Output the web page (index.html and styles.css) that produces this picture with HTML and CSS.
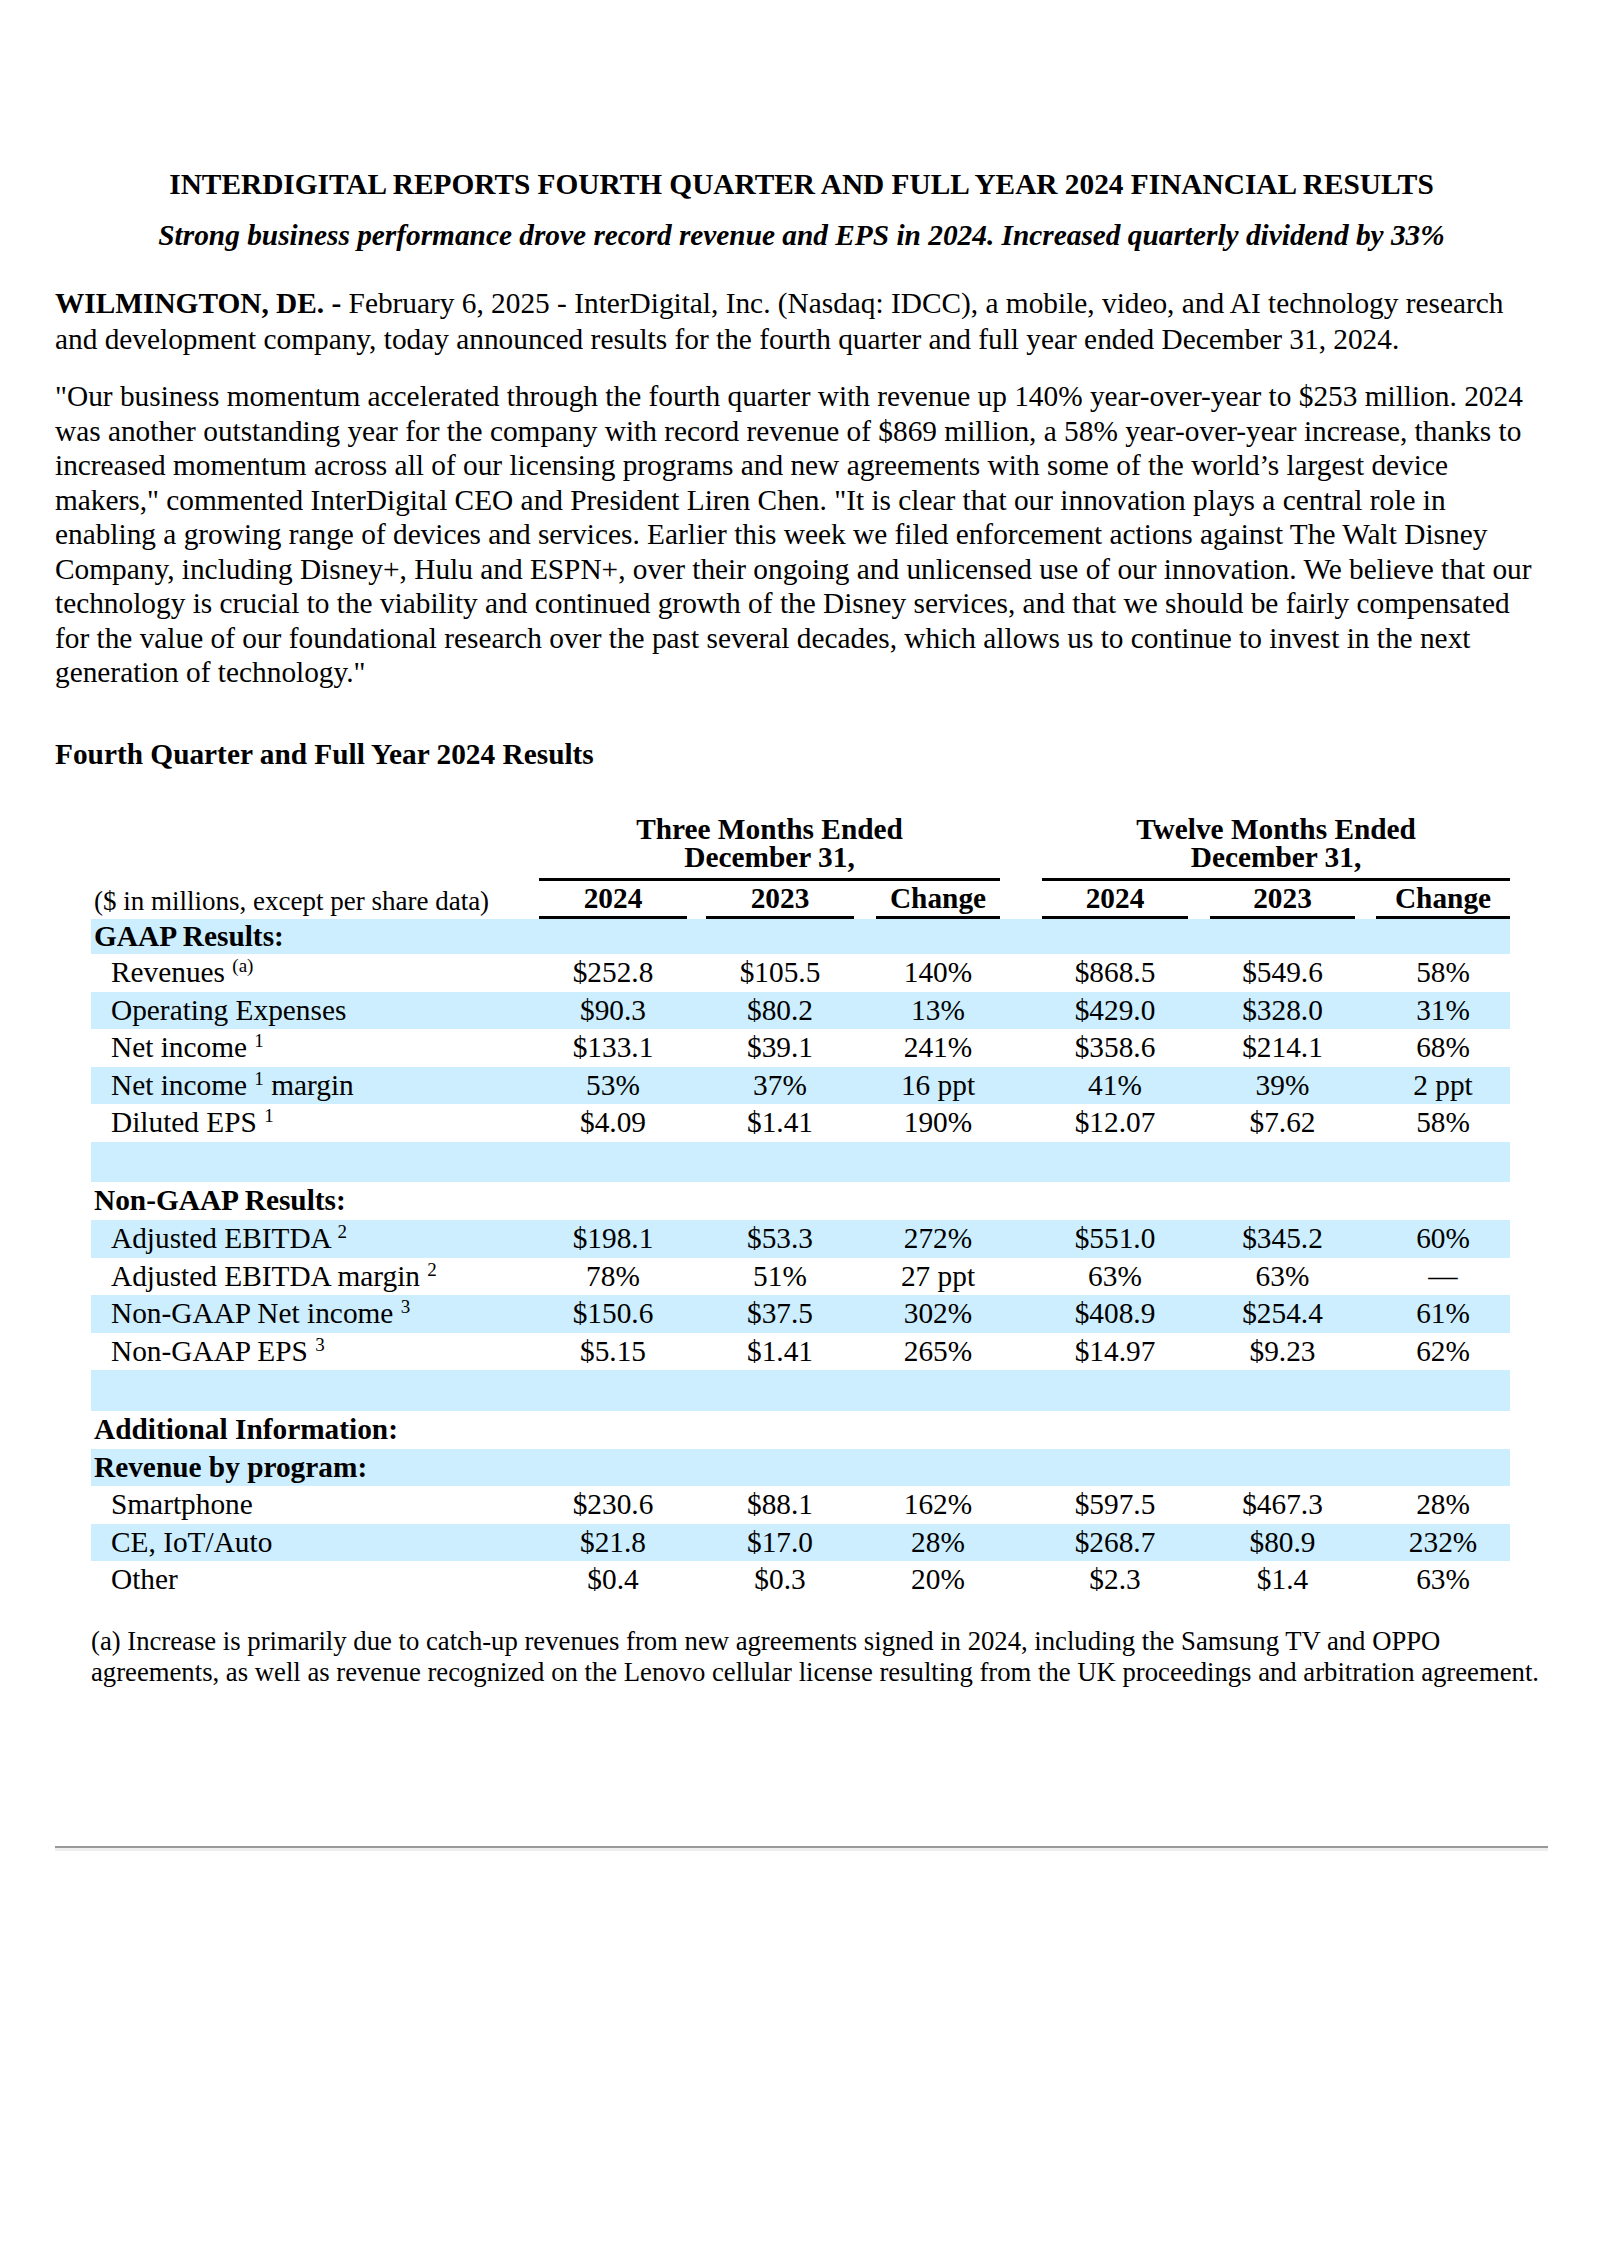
FILE: index.html
```html
<!DOCTYPE html>
<html lang="en">
<head>
    <meta charset="UTF-8">
    <meta name="viewport" content="width=device-width, initial-scale=1.0">
    <title>InterDigital Q4 2024 Results</title>
    <link rel="stylesheet" href="styles.css">
</head>
<body>
    <div class="page">
        <h1 class="title">INTERDIGITAL REPORTS FOURTH QUARTER AND FULL YEAR 2024 FINANCIAL RESULTS</h1>
        <p class="subtitle">Strong business performance drove record revenue and EPS in 2024. Increased quarterly dividend by 33%</p>

        <p class="lead"><b>WILMINGTON, DE. -</b> February 6, 2025 - InterDigital, Inc. (Nasdaq: IDCC), a mobile, video, and AI technology research and development company, today announced results for the fourth quarter and full year ended December 31, 2024.</p>

        <p class="quote">"Our business momentum accelerated through the fourth quarter with revenue up 140% year-over-year to $253 million. 2024 was another outstanding year for the company with record revenue of $869 million, a 58% year-over-year increase, thanks to increased momentum across all of our licensing programs and new agreements with some of the world’s largest device makers," commented InterDigital CEO and President Liren Chen. "It is clear that our innovation plays a central role in enabling a growing range of devices and services. Earlier this week we filed enforcement actions against The Walt Disney Company, including Disney+, Hulu and ESPN+, over their ongoing and unlicensed use of our innovation. We believe that our technology is crucial to the viability and continued growth of the Disney services, and that we should be fairly compensated for the value of our foundational research over the past several decades, which allows us to continue to invest in the next generation of technology."</p>

        <h2 class="section-title">Fourth Quarter and Full Year 2024 Results</h2>

        <table class="results">
            <colgroup>
                <col class="c-label">
                <col class="c-num"><col class="c-sp"><col class="c-num"><col class="c-sp2"><col class="c-chg">
                <col class="c-gap">
                <col class="c-num2"><col class="c-sp2"><col class="c-num3"><col class="c-sp3"><col class="c-chg2">
            </colgroup>
            <thead>
                <tr class="group-row">
                    <th></th>
                    <th colspan="5" class="group">Three Months Ended<br>December 31,</th>
                    <th></th>
                    <th colspan="5" class="group">Twelve Months Ended<br>December 31,</th>
                </tr>
                <tr class="year-row">
                    <th class="unit">($ in millions, except per share data)</th>
                    <th class="year">2024</th><th></th><th class="year">2023</th><th></th><th class="year">Change</th>
                    <th></th>
                    <th class="year">2024</th><th></th><th class="year">2023</th><th></th><th class="year">Change</th>
                </tr>
            </thead>
            <tbody>
                <tr class="shade first"><td class="head" colspan="12">GAAP Results:</td></tr>
                <tr>
                    <td class="item">Revenues <sup>(a)</sup></td>
                    <td>$252.8</td><td></td><td>$105.5</td><td></td><td>140%</td><td></td>
                    <td>$868.5</td><td></td><td>$549.6</td><td></td><td>58%</td>
                </tr>
                <tr class="shade">
                    <td class="item">Operating Expenses</td>
                    <td>$90.3</td><td></td><td>$80.2</td><td></td><td>13%</td><td></td>
                    <td>$429.0</td><td></td><td>$328.0</td><td></td><td>31%</td>
                </tr>
                <tr>
                    <td class="item">Net income <sup>1</sup></td>
                    <td>$133.1</td><td></td><td>$39.1</td><td></td><td>241%</td><td></td>
                    <td>$358.6</td><td></td><td>$214.1</td><td></td><td>68%</td>
                </tr>
                <tr class="shade">
                    <td class="item">Net income <sup>1</sup> margin</td>
                    <td>53%</td><td></td><td>37%</td><td></td><td>16 ppt</td><td></td>
                    <td>41%</td><td></td><td>39%</td><td></td><td>2 ppt</td>
                </tr>
                <tr>
                    <td class="item">Diluted EPS <sup>1</sup></td>
                    <td>$4.09</td><td></td><td>$1.41</td><td></td><td>190%</td><td></td>
                    <td>$12.07</td><td></td><td>$7.62</td><td></td><td>58%</td>
                </tr>
                <tr class="shade spacer"><td colspan="12"></td></tr>
                <tr><td class="head" colspan="12">Non-GAAP Results:</td></tr>
                <tr class="shade">
                    <td class="item">Adjusted EBITDA <sup>2</sup></td>
                    <td>$198.1</td><td></td><td>$53.3</td><td></td><td>272%</td><td></td>
                    <td>$551.0</td><td></td><td>$345.2</td><td></td><td>60%</td>
                </tr>
                <tr>
                    <td class="item">Adjusted EBITDA margin <sup>2</sup></td>
                    <td>78%</td><td></td><td>51%</td><td></td><td>27 ppt</td><td></td>
                    <td>63%</td><td></td><td>63%</td><td></td><td>—</td>
                </tr>
                <tr class="shade">
                    <td class="item">Non-GAAP Net income <sup>3</sup></td>
                    <td>$150.6</td><td></td><td>$37.5</td><td></td><td>302%</td><td></td>
                    <td>$408.9</td><td></td><td>$254.4</td><td></td><td>61%</td>
                </tr>
                <tr>
                    <td class="item">Non-GAAP EPS <sup>3</sup></td>
                    <td>$5.15</td><td></td><td>$1.41</td><td></td><td>265%</td><td></td>
                    <td>$14.97</td><td></td><td>$9.23</td><td></td><td>62%</td>
                </tr>
                <tr class="shade spacer"><td colspan="12"></td></tr>
                <tr><td class="head" colspan="12">Additional Information:</td></tr>
                <tr class="shade"><td class="head" colspan="12">Revenue by program:</td></tr>
                <tr>
                    <td class="item">Smartphone</td>
                    <td>$230.6</td><td></td><td>$88.1</td><td></td><td>162%</td><td></td>
                    <td>$597.5</td><td></td><td>$467.3</td><td></td><td>28%</td>
                </tr>
                <tr class="shade">
                    <td class="item">CE, IoT/Auto</td>
                    <td>$21.8</td><td></td><td>$17.0</td><td></td><td>28%</td><td></td>
                    <td>$268.7</td><td></td><td>$80.9</td><td></td><td>232%</td>
                </tr>
                <tr>
                    <td class="item">Other</td>
                    <td>$0.4</td><td></td><td>$0.3</td><td></td><td>20%</td><td></td>
                    <td>$2.3</td><td></td><td>$1.4</td><td></td><td>63%</td>
                </tr>
            </tbody>
        </table>

        <p class="note">(a) Increase is primarily due to catch-up revenues from new agreements signed in 2024, including the Samsung TV and OPPO agreements, as well as revenue recognized on the Lenovo cellular license resulting from the UK proceedings and arbitration agreement.</p>

        <hr class="rule">
    </div>
</body>
</html>
```

FILE: styles.css
```css
* {
    box-sizing: border-box;
}

body {
    margin: 0;
    padding: 0;
    background: #fff;
    color: #000;
    font-family: "Liberation Serif", "Times New Roman", serif;
    font-size: 29.33px;
    line-height: 34.5px;
}

.page {
    padding: 167px 52px 0 55px;
}

.title {
    margin: 0;
    font-size: 29.33px;
    line-height: 34.5px;
    text-align: center;
}

.subtitle {
    margin: 16px 0 0;
    font-weight: bold;
    font-style: italic;
    text-align: center;
}

.lead {
    margin: 34px 0 0;
    line-height: 35.5px;
}

.quote {
    margin: 22px 0 0;
}

.section-title {
    margin: 47px 0 0;
    font-size: 29.33px;
    line-height: 34.5px;
}

/* results table */
.results {
    margin: 44px 0 0 36px;
    width: 1419px;
    table-layout: fixed;
    border-collapse: separate;
    border-spacing: 0;
}

.c-label { width: 448px; }
.c-num { width: 148px; }
.c-sp { width: 19px; }
.c-sp2 { width: 22px; }
.c-sp3 { width: 21px; }
.c-chg { width: 124px; }
.c-gap { width: 42px; }
.c-num2 { width: 146px; }
.c-num3 { width: 145px; }
.c-chg2 { width: 134px; }

.results th,
.results td {
    padding: 0;
    text-align: center;
    white-space: nowrap;
}

.results th {
    font-weight: bold;
}

.group-row th {
    vertical-align: bottom;
}

.group {
    line-height: 28px;
    padding-bottom: 7px !important;
    border-bottom: 3px solid #000;
}

.year-row th {
    line-height: 30px;
    padding: 2px 0 3px;
    vertical-align: bottom;
}

.year-row th.year {
    border-bottom: 3px solid #000;
}

.year-row th.unit {
    text-align: left;
    font-weight: normal;
    font-size: 27px;
    padding-left: 3px;
}

.results tbody td {
    line-height: 37.6px;
    height: 37.6px;
}

.results tbody tr.first td {
    line-height: 35px;
    height: 35px;
}

.results tbody tr.spacer td {
    height: 40.5px;
}

.shade td {
    background-color: #cceeff;
}

.results td.head {
    text-align: left;
    font-weight: bold;
    padding-left: 3px;
}

.results td.item {
    text-align: left;
    padding-left: 20px;
}

sup {
    font-size: 19px;
    line-height: 0;
    vertical-align: 10px;
}

.note {
    margin: 27px -8px 0 36px;
    font-size: 26.7px;
    line-height: 31px;
}

.rule {
    margin: 158px 0 0;
    height: 5px;
    border: 0;
    border-top: 2px solid #999;
    background: #eee;
}
```
